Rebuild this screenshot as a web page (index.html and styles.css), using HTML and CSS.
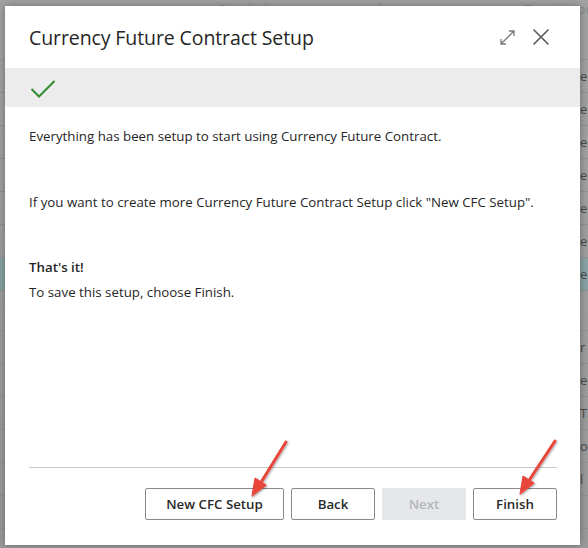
FILE: index.html
```html
<!DOCTYPE html>
<html>
<head>
<meta charset="utf-8">
<link rel="stylesheet" href="styles.css">
</head>
<body>
<div class="backdrop">
  <div class="bg-head"><span class="bg-col1">Conclude</span><span class="bg-col2">l</span><span class="bg-col3">Description</span></div>
  <div class="bg-row"><span>e</span></div>
  <div class="bg-row"><span>e</span></div>
  <div class="bg-row"><span>e</span></div>
  <div class="bg-row"><span>e</span></div>
  <div class="bg-row"><span>e</span></div>
  <div class="bg-row"><span>e</span></div>
  <div class="bg-row sel"><span>e</span></div>
  <div class="bg-row tall"><span></span></div>
  <div class="bg-row"><span>r u</span></div>
  <div class="bg-row"><span>e y</span></div>
  <div class="bg-row"><span>Ta</span></div>
  <div class="bg-row"><span>ou</span></div>
  <div class="bg-row"><span>l</span></div>
  <div class="bg-row"><span></span></div>
</div>

<div class="dialog">
  <div class="dlg-header">
    <h1 class="dlg-title">Currency Future Contract Setup</h1>
    <div class="dlg-tools">
      <svg class="tool" width="17" height="17" viewBox="0 0 17 17">
        <path d="M2 15 L15 2 M10 2 H15 V7 M2 10 V15 H7" fill="none" stroke="#7a7a7a" stroke-width="1.3"/>
      </svg>
      <svg class="tool" width="18" height="18" viewBox="0 0 18 18">
        <path d="M1.5 1.5 L16.5 16.5 M16.5 1.5 L1.5 16.5" fill="none" stroke="#5a5a5a" stroke-width="1.6"/>
      </svg>
    </div>
  </div>
  <div class="dlg-band">
    <svg width="26" height="20" viewBox="0 0 26 20">
      <path d="M1.5 10 L9 17.5 L24.5 2" fill="none" stroke="#2e8b2e" stroke-width="2"/>
    </svg>
  </div>
  <div class="dlg-body">
    <p class="para">Everything has been setup to start using Currency Future Contract.</p>
    <p class="para p2">If you want to create more Currency Future Contract Setup click "New CFC Setup".</p>
    <p class="para p3 bold">That's it!</p>
    <p class="para p4">To save this setup, choose Finish.</p>
  </div>
  <div class="dlg-footer">
    <button class="btn btn-new">New CFC Setup</button>
    <button class="btn">Back</button>
    <button class="btn disabled">Next</button>
    <button class="btn">Finish</button>
  </div>
</div>

<svg class="arrows" width="588" height="548" viewBox="0 0 588 548">
  <defs>
    <filter id="sh" x="-20%" y="-20%" width="140%" height="140%">
      <feDropShadow dx="1" dy="1" stdDeviation="1" flood-color="#000" flood-opacity="0.35"/>
    </filter>
  </defs>
  <g filter="url(#sh)" fill="#e8443a" stroke="#e8443a" stroke-linecap="round">
    <line x1="286" y1="442" x2="260" y2="484" stroke-width="3"/>
    <polygon points="252,496 255,478 266,485" stroke-width="1" stroke-linejoin="round"/>
    <line x1="555" y1="441" x2="528" y2="482" stroke-width="3"/>
    <polygon points="520,494 523,476 534,483" stroke-width="1" stroke-linejoin="round"/>
  </g>
</svg>
</body>
</html>
```

FILE: styles.css
```css
* { box-sizing: border-box; }
html, body {
  margin: 0;
  padding: 0;
  width: 588px;
  height: 548px;
  overflow: hidden;
}
body {
  position: relative;
  background: #9d9d9d;
  font-family: "Open Sans", "Noto Sans", sans-serif;
  color: #212121;
}
.backdrop {
  display: flex;
  flex-direction: column;
  width: 588px;
  height: 548px;
  background: linear-gradient(#a3a3a3, #9b9b9b);
}
.bg-head {
  height: 60px;
  flex: none;
  position: relative;
  font-size: 13px;
  line-height: 18px;
  color: #8a8a8a;
  border-bottom: 1px solid #949494;
}
.bg-head span { position: absolute; top: 0; }
.bg-col1 { left: 218px; }
.bg-col2 { left: 378px; }
.bg-col3 { left: 524px; }
.bg-row {
  height: 33px;
  flex: none;
  border-bottom: 1px solid #929292;
  display: flex;
  align-items: center;
  justify-content: flex-end;
  font-size: 13px;
  color: #4a4a4a;
}
.bg-row span { width: 8px; overflow: hidden; white-space: nowrap; }
.bg-row.sel { background: #8aa3a4; }
.bg-row.tall { height: 40px; }

.dialog {
  position: absolute;
  left: 5px;
  top: 6px;
  width: 575px;
  height: 539px;
  background: #fff;
  box-shadow: 0 0 8px rgba(0,0,0,0.35);
  display: flex;
  flex-direction: column;
}
.dlg-header {
  height: 62px;
  display: flex;
  align-items: center;
  justify-content: space-between;
  padding: 0 30px 0 24px;
}
.dlg-title {
  margin: 0;
  font-size: 19.5px;
  font-weight: 400;
  color: #262626;
  letter-spacing: -0.1px;
}
.dlg-tools {
  display: flex;
  gap: 16px;
  align-items: center;
}
.tool { display: block; }
.dlg-band {
  height: 39px;
  background: #ececec;
  display: flex;
  align-items: center;
  padding-left: 25px;
}
.dlg-band svg { display: block; margin-top: 2px; }
.dlg-body {
  flex: 1;
  padding: 19px 24px 0;
  font-size: 13.3px;
}
.para {
  margin: 0;
  line-height: 20px;
  color: #262626;
}
.p2 { margin-top: 46px; }
.p3 { margin-top: 45px; }
.p4 { margin-top: 5px; }
.bold { font-weight: 600; }
.dlg-footer {
  margin: 0 23px 25px 24px;
  border-top: 1px solid #c8c8c8;
  padding-top: 20px;
  display: flex;
  justify-content: flex-end;
  gap: 7px;
}
.btn {
  height: 32px;
  width: 84px;
  background: #fff;
  border: 1px solid #8a8a8a;
  border-radius: 2px;
  font-family: "Open Sans", "Noto Sans", sans-serif;
  font-size: 13.3px;
  font-weight: 600;
  color: #2a2a2a;
  padding: 0;
}
.btn-new { width: 139px; }
.btn.disabled {
  background: #e6e7e9;
  border-color: #e6e7e9;
  color: #b3b6bb;
}
.arrows {
  position: absolute;
  left: 0;
  top: 0;
  pointer-events: none;
}
```
